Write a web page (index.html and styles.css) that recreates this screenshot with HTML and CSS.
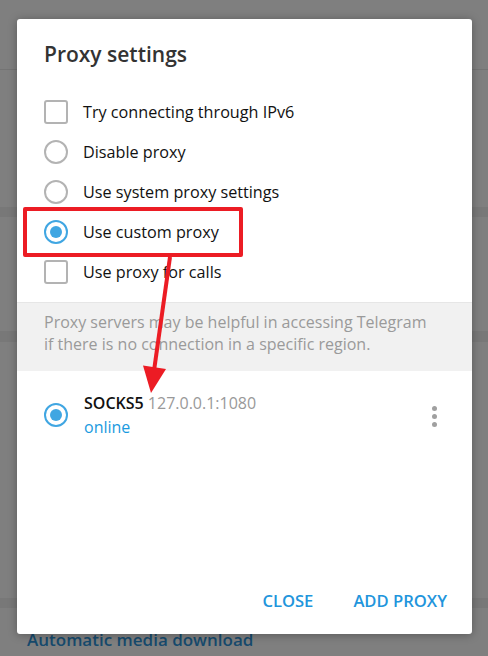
FILE: index.html
```html
<!DOCTYPE html>
<html>
<head>
<meta charset="utf-8">
<link rel="stylesheet" href="styles.css">
</head>
<body>
<div class="page">
  <div class="bg">
    <div class="bg-head"></div>
    <div class="bg-block b1"></div>
    <div class="bg-band"></div>
    <div class="bg-block b2"></div>
    <div class="bg-band b-thick"></div>
    <div class="bg-block b3"></div>
    <div class="bg-band"></div>
    <div class="bg-link">Automatic media download</div>
  </div>

  <div class="dialog">
    <div class="title">Proxy settings</div>
    <div class="options">
      <div class="row"><span class="check"></span><span class="label">Try connecting through IPv6</span></div>
      <div class="row"><span class="radio"></span><span class="label">Disable proxy</span></div>
      <div class="row"><span class="radio"></span><span class="label">Use system proxy settings</span></div>
      <div class="row"><span class="radio on"></span><span class="label">Use custom proxy</span></div>
      <div class="row"><span class="check"></span><span class="label">Use proxy for calls</span></div>
    </div>
    <div class="about">Proxy servers may be helpful in accessing Telegram<br>if there is no connection in a specific region.</div>
    <div class="proxy">
      <span class="radio on"></span>
      <div class="proxy-info">
        <div class="proxy-line"><span class="proto">SOCKS5</span> <span class="addr">127.0.0.1:1080</span></div>
        <div class="status">online</div>
      </div>
      <span class="menu"><i></i><i></i><i></i></span>
    </div>
    <div class="spacer"></div>
    <div class="footer">
      <span class="btn">CLOSE</span>
      <span class="btn">ADD PROXY</span>
    </div>
  </div>

  <div class="mark-box"></div>
  <svg class="mark-arrow" width="488" height="656" viewBox="0 0 488 656">
    <line x1="170" y1="257" x2="154.4" y2="368" stroke="#ec1c24" stroke-width="4"/>
    <polygon points="143,365.5 166,369 151,393" fill="#ec1c24"/>
  </svg>
</div>
</body>
</html>
```

FILE: styles.css
```css
html, body {
  margin: 0;
  padding: 0;
}
body {
  width: 488px;
  height: 656px;
  overflow: hidden;
  font-family: "Open Sans", "Noto Sans", sans-serif;
  background: #7f7f7f;
}
.page {
  position: relative;
  width: 488px;
  height: 656px;
  overflow: hidden;
}
.bg {
  display: flex;
  flex-direction: column;
}
.bg-head {
  height: 69px;
  border-bottom: 1px solid #747474;
}
.bg-block.b1 { height: 137px; }
.bg-block.b2 { height: 114px; }
.bg-block.b3 { height: 256px; }
.bg-band {
  height: 10px;
  background: #787878;
}
.bg-band.b-thick { height: 11px; }
.bg-link {
  padding: 21px 0 0 27px;
  font-size: 17px;
  font-weight: 600;
  color: #164a6d;
  line-height: 22px;
}

.dialog {
  position: absolute;
  left: 17px;
  top: 19px;
  width: 455px;
  height: 615px;
  background: #fff;
  border-radius: 3px;
  box-shadow: 0 1px 10px rgba(0, 0, 0, 0.3);
  display: flex;
  flex-direction: column;
}
.title {
  padding: 21px 0 0 27px;
  font-size: 21px;
  font-weight: 600;
  line-height: 28px;
  color: #333;
  height: 52px;
}
.options {
  display: flex;
  flex-direction: column;
}
.row {
  height: 40px;
  display: flex;
  align-items: center;
  padding-left: 27px;
}
.label {
  margin-left: 15px;
  font-size: 16.2px;
  line-height: 22px;
  color: #111;
}
.check {
  box-sizing: border-box;
  width: 24px;
  height: 24px;
  border: 2px solid #b3b3b3;
  border-radius: 3px;
}
.radio {
  box-sizing: border-box;
  width: 24px;
  height: 24px;
  border: 2px solid #b3b3b3;
  border-radius: 50%;
  display: flex;
  align-items: center;
  justify-content: center;
  flex: none;
}
.radio.on {
  border-color: #40a6e2;
}
.radio.on::after {
  content: "";
  width: 12px;
  height: 12px;
  border-radius: 50%;
  background: #40a6e2;
}
.about {
  margin-top: 10px;
  border-top: 1px solid #e6e6e6;
  background: #f1f1f1;
  height: 60px;
  padding: 8px 0 0 27px;
  font-size: 16px;
  line-height: 22px;
  color: #9a9a9a;
}
.proxy {
  display: flex;
  align-items: center;
  padding: 20px 0 0 27px;
  height: 48px;
}
.proxy-info {
  margin-left: 16px;
  flex: 1;
}
.proxy-line {
  font-size: 16px;
  line-height: 24px;
}
.proto {
  font-weight: 600;
  color: #111;
}
.addr {
  color: #999;
}
.status {
  font-size: 16px;
  line-height: 24px;
  color: #1a9ae0;
}
.menu {
  display: flex;
  flex-direction: column;
  gap: 3px;
  margin-right: 35px;
  margin-top: 2px;
}
.menu i {
  display: block;
  width: 5px;
  height: 5px;
  border-radius: 50%;
  background: #a0a0a0;
}
.spacer {
  flex: 1;
}
.footer {
  height: 66px;
  display: flex;
  justify-content: flex-end;
  align-items: center;
  gap: 40px;
  padding-right: 25px;
  padding-bottom: 1px;
  box-sizing: border-box;
}
.btn {
  font-size: 16.6px;
  font-weight: 600;
  color: #2295dc;
  line-height: 22px;
}

.mark-box {
  position: absolute;
  left: 23px;
  top: 207px;
  width: 212px;
  height: 42px;
  border: 4px solid #ec1c24;
  border-radius: 2px;
}
.mark-arrow {
  position: absolute;
  left: 0;
  top: 0;
}
```
